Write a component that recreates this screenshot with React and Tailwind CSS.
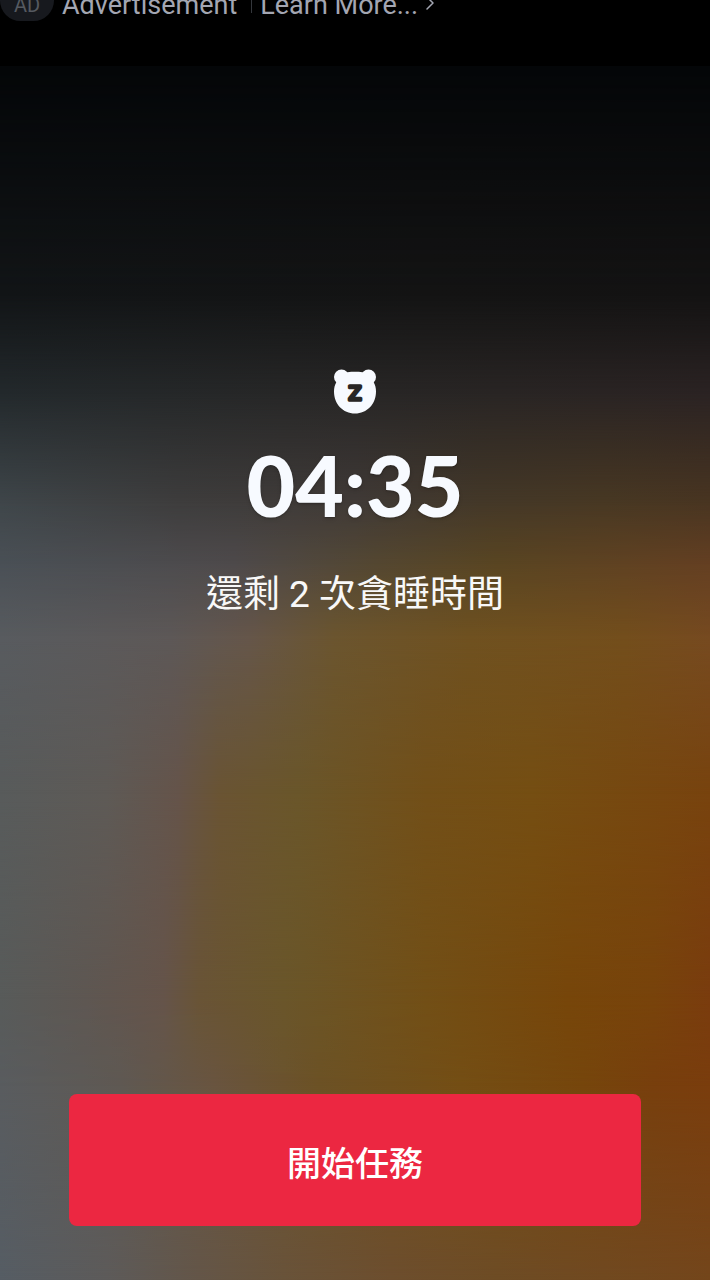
import { ChevronRight } from 'lucide-react';

function AdBar() {
  return (
    <header className="h-[66px] shrink-0 overflow-hidden bg-black">
      <a href="#ad" className="-mt-5 flex h-[41px] items-center text-[#a3a6b2]">
        <span className="flex h-full w-[54px] items-center justify-center rounded-full bg-[#17191e] pt-2 text-[20px] text-[#555960]">
          AD
        </span>
        <span className="ml-2 pt-2 text-[27px] leading-8">Advertisement</span>
        <span className="ml-3.5 mr-2 h-6 w-px bg-[#34373c]" />
        <span className="pt-2 text-[27px] leading-8">Learn More...</span>
        <ChevronRight className="mt-1 size-6" strokeWidth={1.5} />
      </a>
    </header>
  );
}

function BearLogo() {
  return (
    <svg viewBox="0 0 44 46" className="h-[46px] w-11" aria-hidden="true">
      <g fill="#f7faff">
        <circle cx="8.5" cy="9" r="7.5" />
        <circle cx="35.5" cy="9" r="7.5" />
        <path d="M7 8C12 3.8 17 3.8 22 3.8S32 3.8 37 8c.5 1.500 2 3.500 3.500 6 1.800 3 2.500 6 2.500 9.500C43 36 34 45.500 22 45.500S1 36 1 23.500C1 20 1.700 17 3.500 14 5 11.500 6.500 9.500 7 8Z" />
      </g>
      <text
        x="22"
        y="32"
        textAnchor="middle"
        fontFamily="'DejaVu Sans', sans-serif"
        fontSize="19"
        fill="#282625"
        stroke="#282625"
        strokeWidth="3.4"
        strokeLinejoin="round"
      >
        Z
      </text>
    </svg>
  );
}

// Blurred wallpaper: each band fades into the one listed after it
const BANDS = [
  'bg-[#040608] mask-[linear-gradient(to_bottom,black_0%,transparent_19%)]',
  'bg-[linear-gradient(to_right,#121517_0%,#141414_60%,#141313_100%)] mask-[linear-gradient(to_bottom,black_19%,transparent_27%)]',
  'bg-[linear-gradient(to_right,#23292c_0%,#272727_40%,#292524_70%,#2b2323_100%)] mask-[linear-gradient(to_bottom,black_27%,transparent_36%)]',
  'bg-[linear-gradient(to_right,#3f464a_0%,#3e3d3d_25%,#403a37_50%,#443828_68%,#483823_85%,#493521_100%)] mask-[linear-gradient(to_bottom,black_36%,transparent_41%)]',
  'bg-[linear-gradient(to_right,#4a5056_0%,#4e4a4b_33%,#544731_53%,#594522_70%,#604222_88%,#643f22_100%)] mask-[linear-gradient(to_bottom,black_41%,transparent_47%)]',
  'bg-[linear-gradient(to_right,#585b5f_0%,#5d5857_24%,#65564a_35%,#6b552f_47%,#6f5120_66%,#734e1c_88%,#764a20_100%)] mask-[linear-gradient(to_bottom,black_47%,transparent_60%)]',
  'bg-[linear-gradient(to_right,#585b5b_0%,#5e5a56_15%,#65544a_25%,#6a5433_31%,#6a562a_42%,#724f18_60%,#754e12_75%,#78430e_100%)] mask-[linear-gradient(to_bottom,black_60%,transparent_77%)]',
  'bg-[linear-gradient(to_right,#585b5a_0%,#5e5752_12%,#65544a_23%,#695436_28%,#6a562a_40%,#724f16_60%,#77460a_80%,#78430b_92%,#7a3c0e_100%)] mask-[linear-gradient(to_bottom,black_77%,transparent_84%)]',
  'bg-[linear-gradient(to_right,#595c5f_0%,#5f5953_17%,#695540_30%,#6c5225_45%,#744e14_65%,#76460c_82%,#783f0d_92%,#7a3d0d_100%)] mask-[linear-gradient(to_bottom,black_84%,transparent_100%)]',
  'bg-[linear-gradient(to_right,#565d64_0%,#5d5b5a_15%,#645648_28%,#69533a_40%,#6d4e2e_55%,#6e4c25_70%,#74461b_100%)]',
];

function Backdrop() {
  return (
    <div className="absolute inset-0 -z-10">
      {BANDS.map((band, i) => (
        <div key={band} className={`absolute inset-0 ${band}`} style={{ zIndex: BANDS.length - i }} />
      ))}
    </div>
  );
}

export default function App() {
  return (
    <div className="flex min-h-screen flex-col bg-black font-[Roboto,'Noto_Sans_CJK_TC',sans-serif]">
      <AdBar />
      <main className="relative isolate flex flex-1 flex-col items-center px-[69px] pb-[54px] pt-[302px]">
        <Backdrop />
        <BearLogo />
        <time className="mt-5 font-[Lato,sans-serif] text-[84px] font-black leading-[102px] text-[#f7faff] text-shadow-md">
          04:35
        </time>
        <p className="mt-8 text-[37px] leading-[54px] text-[#f8f8f8]">還剩 2 次貪睡時間</p>
        <button
          type="button"
          className="mt-auto h-[132px] w-full rounded-lg bg-[#ec2741] pt-2 text-[34px] font-medium text-white"
        >
          開始任務
        </button>
      </main>
    </div>
  );
}
